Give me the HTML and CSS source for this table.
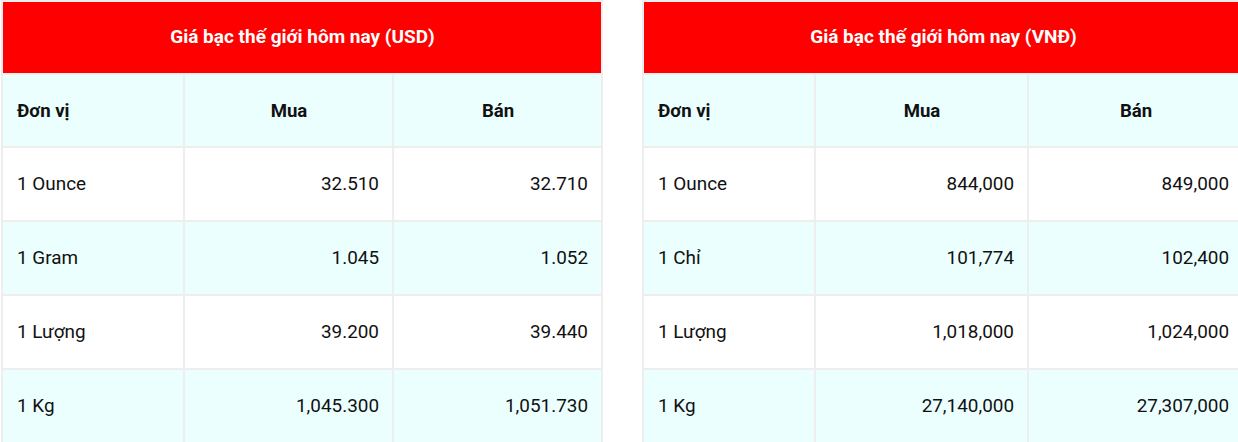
FILE: index.html
```html
<!DOCTYPE html>
<html lang="vi">
<head>
<meta charset="utf-8">
<title>Giá bạc thế giới</title>
<link rel="stylesheet" href="styles.css">
</head>
<body>
<div class="wrap">
  <table class="price price-usd">
    <colgroup><col class="c1"><col class="c2"><col class="c3"></colgroup>
    <thead>
      <tr><th colspan="3" class="title">Giá bạc thế giới hôm nay (USD)</th></tr>
      <tr class="alt head"><th class="unit">Đơn vị</th><th>Mua</th><th>Bán</th></tr>
    </thead>
    <tbody>
      <tr><td class="unit">1 Ounce</td><td>32.510</td><td>32.710</td></tr>
      <tr class="alt"><td class="unit">1 Gram</td><td>1.045</td><td>1.052</td></tr>
      <tr><td class="unit">1 Lượng</td><td>39.200</td><td>39.440</td></tr>
      <tr class="alt"><td class="unit">1 Kg</td><td>1,045.300</td><td>1,051.730</td></tr>
    </tbody>
  </table>
  <table class="price price-vnd">
    <colgroup><col class="c1"><col class="c2"><col class="c3"></colgroup>
    <thead>
      <tr><th colspan="3" class="title">Giá bạc thế giới hôm nay (VNĐ)</th></tr>
      <tr class="alt head"><th class="unit">Đơn vị</th><th>Mua</th><th>Bán</th></tr>
    </thead>
    <tbody>
      <tr><td class="unit">1 Ounce</td><td>844,000</td><td>849,000</td></tr>
      <tr class="alt"><td class="unit">1 Chỉ</td><td>101,774</td><td>102,400</td></tr>
      <tr><td class="unit">1 Lượng</td><td>1,018,000</td><td>1,024,000</td></tr>
      <tr class="alt"><td class="unit">1 Kg</td><td>27,140,000</td><td>27,307,000</td></tr>
    </tbody>
  </table>
</div>
</body>
</html>
```
FILE: styles.css
```css
html, body {
  margin: 0;
  padding: 0;
  overflow: hidden;
  background: #ffffff;
}
body {
  font-family: Roboto, "Noto Sans", Arial, sans-serif;
  color: #111111;
}
.wrap {
  display: flex;
  gap: 39px;
  padding-left: 1px;
  width: 1238px;
  box-sizing: border-box;
  overflow: hidden;
}
.price {
  flex: none;
  border-collapse: separate;
  border-spacing: 0;
  table-layout: fixed;
  width: 602px;
  border-top: 2px solid #eeeeee;
  border-left: 2px solid #eeeeee;
}
.price-usd .c1 { width: 182px; }
.price-usd .c2 { width: 209px; }
.price-usd .c3 { width: 209px; }
.price-vnd .c1 { width: 172px; }
.price-vnd .c2 { width: 213px; }
.price-vnd .c3 { width: 215px; }
.price th,
.price td {
  box-sizing: border-box;
  height: 74px;
  padding: 0 13px 0 14px;
  border-right: 2px solid #eeeeee;
  border-bottom: 2px solid #eeeeee;
  vertical-align: middle;
  font-size: 18.6px;
  text-align: right;
  white-space: nowrap;
}
.price td {
  font-size: 18.9px;
  padding-bottom: 2px;
}
.price th {
  font-weight: 700;
  text-align: center;
}
.price .unit {
  text-align: left;
}
.price tr.head th {
  height: 73px;
}
.price th.title {
  height: 73px;
  padding-bottom: 3px;
  background: #ff0000;
  color: #ffffff;
  font-size: 19px;
  text-align: center;
}
.price tr.alt th,
.price tr.alt td {
  background: #ebffff;
}
```
